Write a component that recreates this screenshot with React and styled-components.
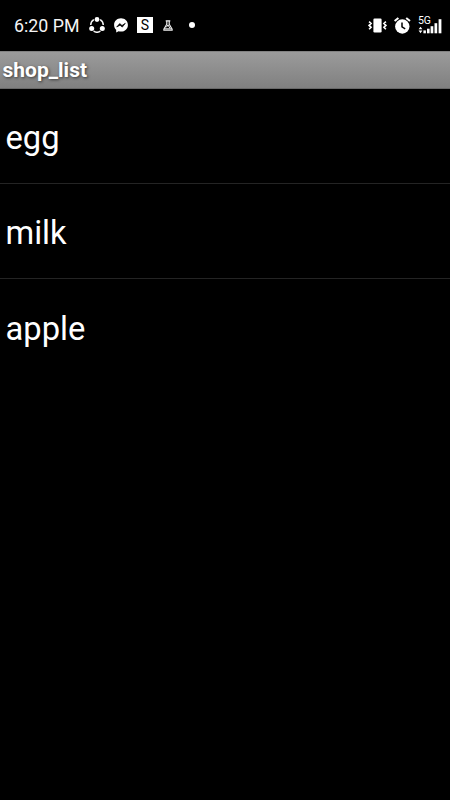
import styled, { createGlobalStyle } from "styled-components";

const items = ["egg", "milk", "apple"];

const App = () => {
  return (
    <>
      <GlobalStyle />
      <Screen>
        <StatusBar>
          <Time>6:20 PM</Time>
          <Notifications>
            <ShareIcon />
            <MessengerIcon />
            <LetterBadge>S</LetterBadge>
            <FlaskIcon />
            <Dot />
          </Notifications>
          <SystemIcons>
            <VibrateIcon />
            <AlarmIcon />
            <SignalIcon />
          </SystemIcons>
        </StatusBar>
        <TitleBar>shop_list</TitleBar>
        <List>
          {items.map((item) => (
            <Row key={item}>{item}</Row>
          ))}
        </List>
      </Screen>
    </>
  );
};

const ShareIcon = () => (
  <svg width="16" height="16" viewBox="0 0 16 16" fill="none">
    <path
      d="M4.9 2.6A6.3 6.3 0 0 0 1.7 8M4.6 14.2a6.3 6.3 0 0 0 6.8 0M14.3 8a6.3 6.3 0 0 0-3.2-5.4"
      stroke="#f4f4f4"
      strokeWidth="1.5"
    />
    <circle cx="8" cy="2.5" r="2.4" fill="#fff" />
    <circle cx="2.7" cy="11.6" r="2.5" fill="#fff" />
    <circle cx="13.3" cy="11.6" r="2.5" fill="#fff" />
  </svg>
);

const MessengerIcon = () => (
  <svg width="14" height="15" viewBox="0 0 14 15">
    <path
      d="M7 .3C3.1.3.1 3.1.1 6.9c0 2 .8 3.7 2.1 4.9v2.7l2.4-1.2c.8.2 1.6.3 2.4.3 3.9 0 6.9-2.9 6.9-6.7S10.9.3 7 .3z"
      fill="#fff"
    />
    <path d="M2.7 9l3-3.4 2.3 1.9 3.3-2.2-3 3.8L6 7.2z" fill="#000" stroke="#000" strokeWidth=".7" />
  </svg>
);

const FlaskIcon = () => (
  <svg width="10" height="11" viewBox="0 0 10 11" fill="none" stroke="#f0f0f0">
    <path d="M2.7.8h4.6M3.8.8v3.4L.9 9.2v1h8.2v-1l-2.9-5V.8" strokeWidth="1.2" />
    <path d="M3.4 7.3L5 4.8l1.8 3.4M2 8.8h6" strokeWidth="1" />
  </svg>
);

const VibrateIcon = () => (
  <svg width="19" height="15" viewBox="0 0 19 15">
    <rect x="5.4" y=".5" width="8.2" height="14" rx="1.2" fill="#fff" />
    <path
      d="M1.1 3.6l2 1.9-2 1.9 2 1.9-2 2M17.9 3.6l-2 1.9 2 1.9-2 1.9 2 2"
      fill="none"
      stroke="#fff"
      strokeWidth="1.6"
    />
  </svg>
);

const AlarmIcon = () => (
  <svg width="17" height="17" viewBox="0 0 17 17" fill="none">
    <circle cx="8.3" cy="9.5" r="7.2" fill="#fff" />
    <path d="M.6 4L4.4.9M16 4L12.2.9" stroke="#fff" strokeWidth="2" />
    <path d="M8 5.5v4.3l3.2 2" stroke="#000" strokeWidth="1.5" />
  </svg>
);

const SignalIcon = () => (
  <Signal>
    <Network>5G</Network>
    <svg width="24" height="17" viewBox="0 0 24 17" fill="#fff">
      <path d="M.6 12.3L2.5 9.8l1.9 2.5zM.6 13.6h3.8l-1.9 2.6z" />
      <rect x="5.4" y="13.4" width="2.5" height="2.9" />
      <rect x="9" y="11.7" width="2.6" height="4.6" />
      <rect x="12.6" y="9.2" width="2.7" height="7.1" />
      <rect x="16.5" y="6.2" width="2.7" height="10.1" />
      <rect x="20.6" y="2.2" width="2.8" height="14.1" />
    </svg>
  </Signal>
);

const GlobalStyle = createGlobalStyle`
  * {
    box-sizing: border-box;
  }

  body {
    margin: 0;
    background: #000;
    font-family: Roboto, "Liberation Sans", sans-serif;
  }

  svg {
    display: block;
    flex-shrink: 0;
  }
`;

const Screen = styled.div`
  width: 100%;
  height: 800px;
  display: flex;
  flex-direction: column;
  background: #000;
  color: #fff;
  overflow: hidden;
`;

const StatusBar = styled.header`
  height: 51px;
  padding: 0 8px 1px 14px;
  display: flex;
  align-items: center;
`;

const Time = styled.span`
  width: 75px;
  font-size: 17.8px;
  line-height: 22px;
  padding-top: 1px;
  color: #f4f4f4;
  white-space: nowrap;
`;

const Notifications = styled.div`
  display: flex;
  align-items: center;

  > :nth-child(2) {
    margin-left: 9px;
  }

  > :nth-child(3) {
    margin-left: 9px;
  }

  > :nth-child(4) {
    margin-left: 10px;
  }

  > :nth-child(5) {
    margin-left: 16px;
  }
`;

const LetterBadge = styled.span`
  width: 16px;
  height: 16px;
  background: #fff;
  color: #000;
  font-size: 14px;
  line-height: 16px;
  text-align: center;
`;

const Dot = styled.span`
  width: 6px;
  height: 6px;
  border-radius: 50%;
  background: #fff;
`;

const SystemIcons = styled.div`
  display: flex;
  align-items: center;
  gap: 7px;
  margin-left: auto;
`;

const Signal = styled.div`
  position: relative;
`;

const Network = styled.span`
  position: absolute;
  top: -1px;
  left: 0;
  font-size: 10.5px;
  line-height: 10px;
  letter-spacing: -0.2px;
`;

const TitleBar = styled.div`
  height: 38px;
  padding-left: 2.5px;
  border-top: 1px solid #828282;
  border-bottom: 1px solid #686868;
  background: linear-gradient(#9b9b9b, #808080);
  font-size: 21px;
  font-weight: 700;
  line-height: 36px;
  text-shadow: 1px 1px 3px rgba(0, 0, 0, 0.6);
`;

const List = styled.ul`
  margin: 0;
  padding: 0;
  list-style: none;
`;

const Row = styled.li`
  height: 95px;
  padding: 3px 0 0 5.5px;
  font-size: 32.7px;
  line-height: 92px;
  border-bottom: 1px solid #242424;

  &:last-child {
    padding-top: 4px;
    border-bottom: none;
  }
`;

export default App;
